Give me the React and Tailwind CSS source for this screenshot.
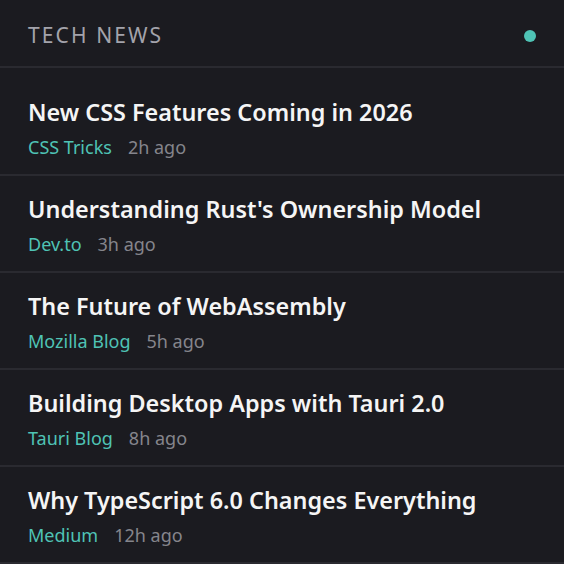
import React from 'react';

const items = [
    { title: 'New CSS Features Coming in 2026', source: 'CSS Tricks', time: '2h ago' },
    { title: "Understanding Rust's Ownership Model", source: 'Dev.to', time: '3h ago' },
    { title: 'The Future of WebAssembly', source: 'Mozilla Blog', time: '5h ago' },
    { title: 'Building Desktop Apps with Tauri 2.0', source: 'Tauri Blog', time: '8h ago' },
    { title: 'Why TypeScript 6.0 Changes Everything', source: 'Medium', time: '12h ago' },
];

const App = () => {
    return (
        <div
            className="min-h-screen w-full bg-[#1b1b20]"
            style={{ fontFamily: '"Noto Sans", "Open Sans", sans-serif' }}
        >
            <header className="flex h-[68px] items-center justify-between border-b-2 border-[#2a2a30] px-7 pt-[6px]">
                <h1 className="text-[21px] uppercase tracking-[0.1em] text-[#a3a3ab]">Tech News</h1>
                <span className="h-3 w-3 rounded-full bg-[#4fc3b5]"></span>
            </header>

            <ul className="pt-[11px]">
                {items.map((item) => (
                    <li
                        key={item.title}
                        className="flex flex-col gap-[5px] border-b-2 border-[#2a2a30] px-7 pt-[17px] pb-[13px]"
                    >
                        <span className="text-[23.4px] leading-8 font-semibold text-[#f5f5f5]">
                            {item.title}
                        </span>
                        <div className="flex items-center gap-4 text-[18px] leading-7">
                            <span className="text-[#4fc3b5]">{item.source}</span>
                            <span className="text-[#85858c]">{item.time}</span>
                        </div>
                    </li>
                ))}
            </ul>
        </div>
    );
};

export default App;
